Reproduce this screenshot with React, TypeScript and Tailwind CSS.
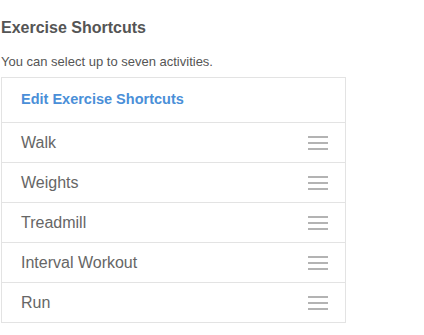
import React from "react";

const shortcuts = ["Walk", "Weights", "Treadmill", "Interval Workout", "Run"];

function DragHandle() {
  return (
    <div className="flex w-[20px] flex-col gap-[4px]">
      <span className="h-[2px] w-full bg-[#b3b3b3]" />
      <span className="h-[2px] w-full bg-[#b3b3b3]" />
      <span className="h-[2px] w-full bg-[#b3b3b3]" />
    </div>
  );
}

export default function App() {
  return (
    <div className="min-h-screen bg-white pl-[1px] font-['Liberation_Sans',Arial,sans-serif]">
      {/* Header */}
      <h2 className="pt-[18px] text-[16px] font-bold leading-[20px] text-[#555555]">
        Exercise Shortcuts
      </h2>
      <p className="mt-[16px] text-[13px] leading-[16px] text-[#555555]">
        You can select up to seven activities.
      </p>

      {/* Shortcut list */}
      <div className="mt-[7px] w-[345px] border border-[#e3e3e3]">
        <div className="flex h-[44px] items-center pl-[19px]">
          <span className="text-[14.5px] font-bold text-[#4a8fd8]">Edit Exercise Shortcuts</span>
        </div>
        {shortcuts.map((name) => (
          <div
            key={name}
            className="flex h-[40px] items-center justify-between border-t border-[#e3e3e3] pl-[19px] pr-[17px]"
          >
            <span className="text-[16px] text-[#666666]">{name}</span>
            <DragHandle />
          </div>
        ))}
      </div>
    </div>
  );
}
